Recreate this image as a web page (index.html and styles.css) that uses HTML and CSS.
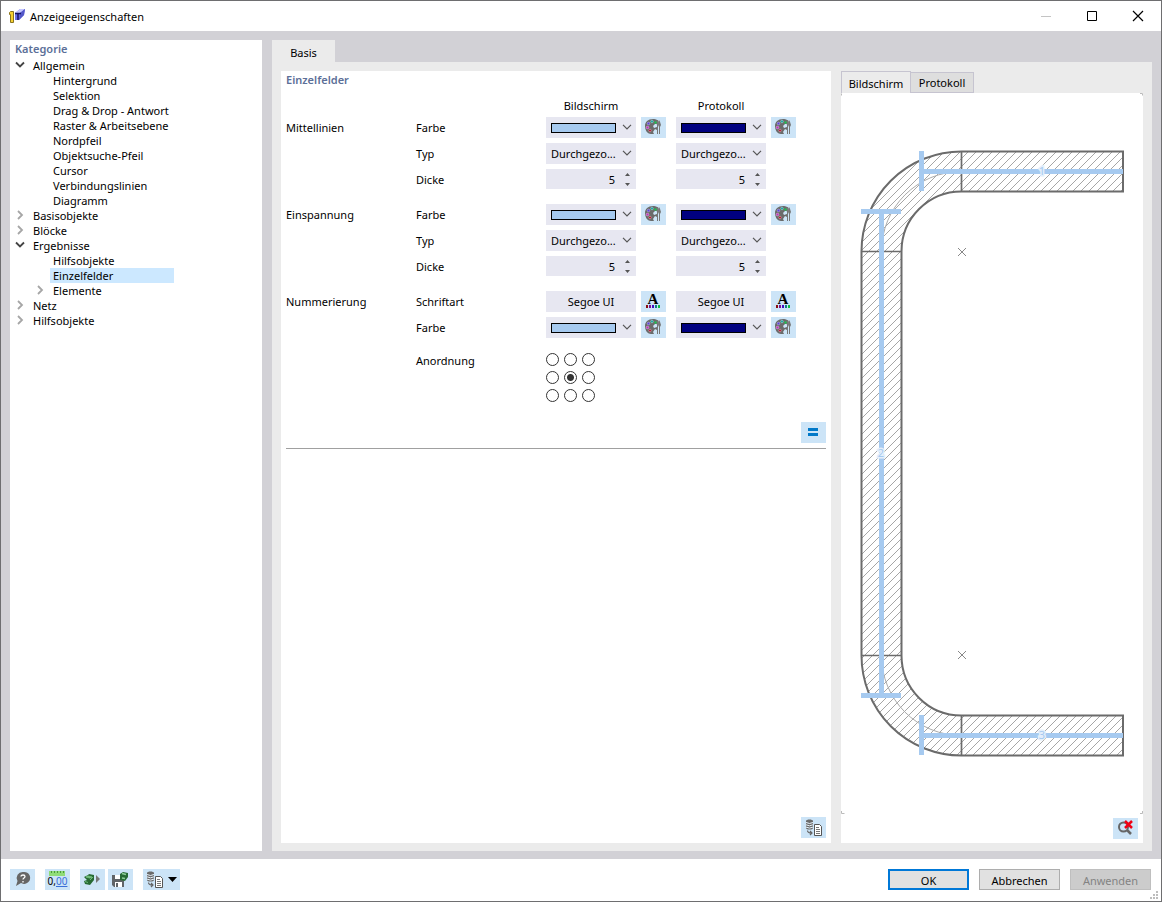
FILE: index.html
```html
<!DOCTYPE html>
<html lang="de">
<head>
	<meta charset="utf-8">
	<title>Anzeigeeigenschaften</title>
	<link rel="stylesheet" href="styles.css">
</head>
<body>

<!-- icons -->
<svg class="defs" width="0" height="0" aria-hidden="true">
	<symbol id="palette" viewBox="0 0 25 21">
		<path fill="#6b6b6b" d="M12 2C7 2 4 5 4 9c0 5 3 8 6 8h3l-1-2 2-3 2 1v-3l-3 1-1-2 2-2h2V3c-1-.700-2.500-1-4-1z"/>
		<path fill="#777" d="M15 5l1 3v9h1V8l1-3-1-2h-1zM18.500 3l1.500 5-1 2v7h-1v-7l-1-2z"/>
		<circle cx="7.500" cy="6.500" r="1.300" fill="#5a3fe0" stroke="#c8c0f0" stroke-width=".5"/>
		<circle cx="11" cy="4.500" r="1.300" fill="#16a0a0" stroke="#b0e0e0" stroke-width=".5"/>
		<circle cx="14.500" cy="5.500" r="1.200" fill="#20c050"/>
		<circle cx="6.500" cy="10.500" r="1.300" fill="#c030c0" stroke="#f0c0f0" stroke-width=".5"/>
		<circle cx="9" cy="13.500" r="1.300" fill="#b01030" stroke="#e0c0c0" stroke-width=".5"/>
	</symbol>
	<symbol id="down" viewBox="0 0 10 6">
		<path d="M1 .8l4 4 4-4" fill="none" stroke="#555" stroke-width="1.2"/>
	</symbol>
	<symbol id="spin" viewBox="0 0 5 13">
		<path d="M0 3l2.500-3L5 3zM0 10l2.500 3L5 10z" fill="#555"/>
	</symbol>
	<symbol id="open" viewBox="0 0 10 10">
		<path d="M1 2.500l4 4 4-4" fill="none" stroke="#444" stroke-width="1.8"/>
	</symbol>
	<symbol id="closed" viewBox="0 0 10 10">
		<path d="M3 1l4 4-4 4" fill="none" stroke="#a6a6a6" stroke-width="1.8"/>
	</symbol>
	<symbol id="copy" viewBox="0 0 18 17">
		<path d="M1 2c0-2 7-2 7 0v7c0 2-7 2-7 0z" fill="#6b6b6b"/>
		<path d="M1 3.500q3.500 2 7 0M1 5.800q3.500 2 7 0M1 8.100q3.500 2 7 0" fill="none" stroke="#e8f2fb"/>
		<path d="M2.500 11.500c0 2 1 2.500 4 2.500M5 12l2 2-2 2" fill="none" stroke="#666" stroke-width="1.200"/>
		<path d="M9.500 5.500h5l2 2v9h-7z" fill="#fff" stroke="#555"/>
		<path d="M11 8.500h3M11 10.500h4M11 12.500h4M11 14.500h4" stroke="#777"/>
	</symbol>
	<symbol id="fontcolor" viewBox="0 0 25 21">
		<path fill="#8b1010" d="M5 14h2v3H5z"/>
		<path fill="#801090" d="M8 14h2v3H8z"/>
		<path fill="#4010c0" d="M11 14h2v3h-2z"/>
		<path fill="#108088" d="M14 14h2v3h-2z"/>
		<path fill="#10c040" d="M17 14h2v3h-2z"/>
	</symbol>
</svg>

<div class="window">

	<header class="titlebar">
		<svg class="logo" viewBox="0 0 16 16">
			<path d="M6 5l5-4h5l-1 6-5 5H6z" fill="#6d70e8"/>
			<path d="M6 5l5-4h5l-5 4z" fill="#c5c6ff"/>
			<path d="M11 5l5-4-1 6-5 5z" fill="#5357c8"/>
			<path d="M.500 4.500l1-1h3v11h-3v-8h-1z" fill="#f6d030" stroke="#8a7420"/>
			<path d="M6 5.500h6M9 5v7" stroke="#141464" stroke-width="1.500"/>
		</svg>
		<h1>Anzeigeeigenschaften</h1>
		<div class="winbtns">
			<button type="button" aria-label="Minimieren" disabled><svg viewBox="0 0 12 12"><path d="M1 6.500h10" stroke="#c4c4c4"/></svg></button>
			<button type="button" aria-label="Maximieren"><svg viewBox="0 0 12 12"><path d="M1.500 1.500h9v9h-9z" fill="none" stroke="#000"/></svg></button>
			<button type="button" aria-label="Schließen"><svg viewBox="0 0 12 12"><path d="M1 1l10 10M11 1L1 11" stroke="#000" stroke-width="1.200"/></svg></button>
		</div>
	</header>

	<div class="main">

		<!-- category tree -->
		<nav class="tree">
			<h2>Kategorie</h2>
			<ul>
				<li><svg><use href="#open"/></svg><a href="#">Allgemein</a>
					<ul>
						<li><a href="#">Hintergrund</a></li>
						<li><a href="#">Selektion</a></li>
						<li><a href="#">Drag &amp; Drop - Antwort</a></li>
						<li><a href="#">Raster &amp; Arbeitsebene</a></li>
						<li><a href="#">Nordpfeil</a></li>
						<li><a href="#">Objektsuche-Pfeil</a></li>
						<li><a href="#">Cursor</a></li>
						<li><a href="#">Verbindungslinien</a></li>
						<li><a href="#">Diagramm</a></li>
					</ul>
				</li>
				<li><svg><use href="#closed"/></svg><a href="#">Basisobjekte</a></li>
				<li><svg><use href="#closed"/></svg><a href="#">Blöcke</a></li>
				<li><svg><use href="#open"/></svg><a href="#">Ergebnisse</a>
					<ul>
						<li><a href="#">Hilfsobjekte</a></li>
						<li><a href="#" class="selected">Einzelfelder</a></li>
						<li><svg><use href="#closed"/></svg><a href="#">Elemente</a></li>
					</ul>
				</li>
				<li><svg><use href="#closed"/></svg><a href="#">Netz</a></li>
				<li><svg><use href="#closed"/></svg><a href="#">Hilfsobjekte</a></li>
			</ul>
		</nav>

		<div class="content">
			<div class="tabs"><button type="button" class="tab">Basis</button></div>

			<div class="page">

				<!-- settings -->
				<form class="settings">
					<h2>Einzelfelder</h2>

					<div class="row head">
						<span class="c3">Bildschirm</span>
						<span class="c5">Protokoll</span>
					</div>

					<div class="group">
						<div class="row">
							<span>Mittellinien</span><span>Farbe</span>
							<div class="field"><select aria-label="Farbe Bildschirm"><option></option></select><i class="swatch light"></i><svg class="arrow"><use href="#down"/></svg></div>
							<button type="button" class="icon" aria-label="Farbe bearbeiten"><svg><use href="#palette"/></svg></button>
							<div class="field c5"><select aria-label="Farbe Protokoll"><option></option></select><i class="swatch navy"></i><svg class="arrow"><use href="#down"/></svg></div>
							<button type="button" class="icon" aria-label="Farbe bearbeiten"><svg><use href="#palette"/></svg></button>
						</div>
						<div class="row">
							<span class="c2">Typ</span>
							<div class="field"><select aria-label="Typ Bildschirm"><option>Durchgezo...</option></select><svg class="arrow"><use href="#down"/></svg></div>
							<div class="field c5"><select aria-label="Typ Protokoll"><option>Durchgezo...</option></select><svg class="arrow"><use href="#down"/></svg></div>
						</div>
						<div class="row">
							<span class="c2">Dicke</span>
							<div class="field num"><input type="number" value="5" aria-label="Dicke Bildschirm"><svg class="spin"><use href="#spin"/></svg></div>
							<div class="field num c5"><input type="number" value="5" aria-label="Dicke Protokoll"><svg class="spin"><use href="#spin"/></svg></div>
						</div>
					</div>

					<div class="group">
						<div class="row">
							<span>Einspannung</span><span>Farbe</span>
							<div class="field"><select aria-label="Farbe Bildschirm"><option></option></select><i class="swatch light"></i><svg class="arrow"><use href="#down"/></svg></div>
							<button type="button" class="icon" aria-label="Farbe bearbeiten"><svg><use href="#palette"/></svg></button>
							<div class="field c5"><select aria-label="Farbe Protokoll"><option></option></select><i class="swatch navy"></i><svg class="arrow"><use href="#down"/></svg></div>
							<button type="button" class="icon" aria-label="Farbe bearbeiten"><svg><use href="#palette"/></svg></button>
						</div>
						<div class="row">
							<span class="c2">Typ</span>
							<div class="field"><select aria-label="Typ Bildschirm"><option>Durchgezo...</option></select><svg class="arrow"><use href="#down"/></svg></div>
							<div class="field c5"><select aria-label="Typ Protokoll"><option>Durchgezo...</option></select><svg class="arrow"><use href="#down"/></svg></div>
						</div>
						<div class="row">
							<span class="c2">Dicke</span>
							<div class="field num"><input type="number" value="5" aria-label="Dicke Bildschirm"><svg class="spin"><use href="#spin"/></svg></div>
							<div class="field num c5"><input type="number" value="5" aria-label="Dicke Protokoll"><svg class="spin"><use href="#spin"/></svg></div>
						</div>
					</div>

					<div class="group">
						<div class="row">
							<span>Nummerierung</span><span>Schriftart</span>
							<button type="button" class="font">Segoe UI</button>
							<button type="button" class="icon letter" aria-label="Schriftart bearbeiten"><svg><use href="#fontcolor"/></svg><b>A</b></button>
							<button type="button" class="font c5">Segoe UI</button>
							<button type="button" class="icon letter" aria-label="Schriftart bearbeiten"><svg><use href="#fontcolor"/></svg><b>A</b></button>
						</div>
						<div class="row">
							<span class="c2">Farbe</span>
							<div class="field"><select aria-label="Farbe Bildschirm"><option></option></select><i class="swatch light"></i><svg class="arrow"><use href="#down"/></svg></div>
							<button type="button" class="icon" aria-label="Farbe bearbeiten"><svg><use href="#palette"/></svg></button>
							<div class="field c5"><select aria-label="Farbe Protokoll"><option></option></select><i class="swatch navy"></i><svg class="arrow"><use href="#down"/></svg></div>
							<button type="button" class="icon" aria-label="Farbe bearbeiten"><svg><use href="#palette"/></svg></button>
						</div>
					</div>

					<div class="row place">
						<span class="c2">Anordnung</span>
						<div class="radios">
							<input type="radio" name="pos" aria-label="oben links">
							<input type="radio" name="pos" aria-label="oben">
							<input type="radio" name="pos" aria-label="oben rechts">
							<input type="radio" name="pos" aria-label="links">
							<input type="radio" name="pos" aria-label="Mitte" checked>
							<input type="radio" name="pos" aria-label="rechts">
							<input type="radio" name="pos" aria-label="unten links">
							<input type="radio" name="pos" aria-label="unten">
							<input type="radio" name="pos" aria-label="unten rechts">
						</div>
					</div>

					<div class="equal">
						<button type="button" class="icon" aria-label="Angleichen"><svg viewBox="0 0 25 21"><path d="M7 6h10v3H7zM7 11h10v3H7z" fill="#0078c8"/></svg></button>
					</div>

					<div class="bottom">
						<button type="button" class="icon" aria-label="Kopieren"><svg class="small"><use href="#copy"/></svg></button>
					</div>
				</form>

				<!-- preview -->
				<section class="preview">
					<div class="viewtabs">
						<button type="button" class="active">Bildschirm</button>
						<button type="button">Protokoll</button>
					</div>
					<div class="view">
						<svg class="drawing" viewBox="841 93 302 721">
							<defs>
								<pattern id="hatch" width="8" height="8" patternUnits="userSpaceOnUse">
									<path d="M-1 9L9 -1M-1 1L1 -1M7 9L9 7" stroke="#808080" stroke-width=".7"/>
								</pattern>
							</defs>
							<path d="M1123 151.500H961.500A100 100 0 0 0 861.500 251.500V655.500A100 100 0 0 0 961.500 755.500H1123V715.500H961.500A60 60 0 0 1 901.500 655.500V251.500A60 60 0 0 1 961.500 191.500H1123z" fill="url(#hatch)" stroke="#6b6b6b" stroke-width="2"/>
							<path d="M961.500 151v40M961.500 715v40M861 251.500h40M861 655.500h40" stroke="#6b6b6b" stroke-width="1.700"/>
							<path d="M961.500 171.500A80 80 0 0 0 881.500 251.500M881.500 655.500A80 80 0 0 0 961.500 735.500" fill="none" stroke="#aaa"/>
							<path d="M921.500 151v40M921.500 171.500H1123M861 211.500h40M881.500 211V695M861 695.500h40M921.500 715v40M921.500 735.500H1123" stroke="#a6caf0" stroke-width="5" fill="none"/>
							<path d="M958 248l8 8M966 248l-8 8M958 651l8 8M966 651l-8 8" stroke="#888"/>
							<path d="M841.500 95.500v-2M1140 93.500h2.500v2M841.500 811v2.500h3M1140 813.500h2.500v-2.500" fill="none" stroke="#bbb"/>
							<g class="tags">
								<text x="1042" y="175">1</text>
								<text x="881" y="457">2</text>
								<text x="1042" y="739">3</text>
							</g>
						</svg>
						<div class="viewbar">
							<button type="button" class="icon" aria-label="Zoom zurücksetzen">
								<svg viewBox="0 0 25 21">
									<circle cx="10.500" cy="9" r="4.500" fill="none" stroke="#666" stroke-width="2"/>
									<path d="M14 12l4 4" stroke="#666" stroke-width="2.500"/>
									<path d="M12 3l7 7M19 3l-7 7" stroke="#f00014" stroke-width="2.500"/>
								</svg>
							</button>
						</div>
					</div>
				</section>
			</div>
		</div>
	</div>

	<footer class="footer">
		<div class="tools">
			<button type="button" class="icon" aria-label="Hilfe">
				<svg viewBox="0 0 25 21"><path d="M13 3a6 6 0 1 1-2 11l-5 3 1.500-5A6 6 0 0 1 13 3z" fill="#666"/><path d="M11 7.500c0-2 4-2 4 0 0 1.500-2 1.500-2 3M13 12v1.500" fill="none" stroke="#fff" stroke-width="1.300"/></svg>
			</button>
			<button type="button" class="icon units" aria-label="Einheiten">
				<svg viewBox="0 0 25 21"><path d="M4 2h16v5H4z" fill="#90dc78"/><path d="M6.500 2v2M9.500 2v2M12.500 2v2M15.500 2v2M18.500 2v2" stroke="#4b9a3c"/></svg>
				<span>0,<u>00</u></span>
			</button>
			<button type="button" class="icon" aria-label="Laden">
				<svg viewBox="0 0 25 21"><path d="M4 8l4-2 1-1 5 1v5l-4 5-5-1-1-3 3-1z" fill="#276b35"/><path d="M8 7l4 1-2 1-4-1zM5 12.500l3 1M10 11l3-3" fill="#8ccf98" stroke="#6dbb7a"/><path d="M16 6l4 4-4 4z" fill="#777"/></svg>
			</button>
			<button type="button" class="icon" aria-label="Speichern">
				<svg viewBox="0 0 25 21"><path d="M4 6h12v12H6l-2-2z" fill="#606468"/><path d="M7 6h5v4H7zM7 13h7v5H7z" fill="#fff"/><path d="M8 14h2v4H8z" fill="#606468"/><path d="M12 5l3-2 5 1v4l-3 4-5-1v-3z" fill="#276b35"/><path d="M14 4.500l4 1M14 9l3 .500" stroke="#8ccf98" stroke-width="1.500"/></svg>
			</button>
			<button type="button" class="icon wide" aria-label="Vorlage"><svg class="small"><use href="#copy"/></svg><svg class="caret" viewBox="0 0 9 5"><path d="M0 0h9L4.500 5z"/></svg></button>
		</div>
		<div class="actions">
			<button type="button" class="default">OK</button>
			<button type="button">Abbrechen</button>
			<button type="button" disabled>Anwenden</button>
		</div>
		<svg class="grip" viewBox="0 0 8 8"><path d="M6 0h2v2H6zM3 3h2v2H3zM6 3h2v2H6zM0 6h2v2H0zM3 6h2v2H3zM6 6h2v2H6z" fill="#bdbdbd"/></svg>
	</footer>
</div>

</body>
</html>
```
FILE: styles.css
```css
* { margin:0; padding:0; box-sizing:border-box; }
body { font:11px/15px "Noto Sans", "Open Sans", sans-serif; color:#000; }
button, input, select { font:inherit; color:inherit; border:0; border-radius:0; }
svg { display:block; flex:none; }
a { color:inherit; text-decoration:none; }
h2 { font-size:11px; line-height:15px; font-weight:600; color:#5c6f98; }
.defs { position:absolute; }

.window { display:flex; flex-direction:column; min-height:100vh; background:#fff; border:1px solid #6e6e70; }

/* title bar */
.titlebar { display:flex; align-items:center; height:30px; padding-left:8px; }
.logo { width:16px; height:16px; }
.titlebar h1 { flex:1; padding-left:5px; font-size:11px; line-height:15px; font-weight:normal; }
.winbtns { display:flex; }
.winbtns button { width:46px; height:30px; background:none; display:flex; align-items:center; justify-content:center; }
.winbtns svg { width:12px; height:12px; }

.main { flex:1; display:flex; gap:10px; padding:9px 9px 8px; background:#d2d1d6; }

/* tree */
.tree { width:252px; padding:1px 5px; background:#fff; }
.tree h2 { margin-bottom:2px; }
.tree ul { list-style:none; }
.tree > ul > li { padding-left:15px; }
.tree li li { padding-left:20px; }
.tree li svg { float:left; width:10px; height:10px; margin:2px 0 0 -15px; }
.tree a { display:block; padding-left:3px; line-height:15px; }
.tree a.selected { width:124px; background:#cce8ff; }

/* content */
.content { flex:1; display:flex; flex-direction:column; }
.tabs { height:22px; display:flex; }
.tab { width:63px; padding-top:3px; background:#ebebeb; }
.page { flex:1; display:flex; gap:10px; padding:9px 9px 8px; background:#ebebeb; }

.settings { flex:1; display:flex; flex-direction:column; padding:1px 5px 5px; background:#fff; }
.row { display:grid; grid-template-columns:130px 130px 90px 5px 25px 10px 90px 5px 25px; height:26px; align-items:start; }
.row > span { line-height:21px; }
.row > * { grid-row:1; }
.row .c2 { grid-column:2; }
.row .field, .row .font { grid-column:3; }
.row .icon { grid-column:5; }
.row .field.c5, .row .font.c5 { grid-column:7; }
.row .c5 + .icon { grid-column:9; }
.head { height:30px; padding-top:8px; text-align:center; }
.head .c3 { grid-column:3; }
.head .c5 { grid-column:7; }
.group { margin-bottom:9px; }

.field { position:relative; height:21px; background:#e7e7f1; }
.field select { appearance:none; width:100%; height:21px; padding:0 5px; background:transparent; }
.field input { appearance:textfield; width:100%; height:20px; padding-right:21px; text-align:right; background:transparent; }
.field input::-webkit-inner-spin-button { display:none; }
.num { height:20px; }
.swatch { position:absolute; left:5px; top:6px; width:65px; height:10px; border:1px solid #000; pointer-events:none; }
.light { background:#a6caf0; }
.navy { background:#000080; }
.arrow { position:absolute; right:4px; top:7px; width:10px; height:6px; pointer-events:none; }
.spin { position:absolute; right:6px; top:4px; width:5px; height:13px; pointer-events:none; }
.font { height:21px; background:#e7e7f1; }

.icon { position:relative; width:25px; height:21px; display:flex; align-items:center; justify-content:center; background:#cce4f7; }
.icon svg { width:25px; height:21px; }
.icon .small { width:18px; height:17px; }
.letter b { position:absolute; left:0; top:0; width:24px; font:bold 15px/16px "Liberation Serif", serif; text-align:center; }

.place { height:69px; margin-top:1px; }
.place > span { line-height:15px; }
.radios { grid-column:3; display:grid; grid-template-columns:repeat(3, 13px); gap:5px; }
.radios input { appearance:none; width:13px; height:13px; border:1px solid #333; border-radius:50%; background:#fff; }
.radios input:checked { background:radial-gradient(#333 3px, #fff 4px); }

.equal { display:flex; justify-content:flex-end; padding-bottom:5px; border-bottom:1px solid #a0a0a0; }
.bottom { margin-top:auto; display:flex; justify-content:flex-end; }

/* preview */
.preview { width:302px; display:flex; flex-direction:column; }
.viewtabs { display:flex; align-items:flex-end; height:22px; }
.viewtabs button { height:21px; width:63px; border:1px solid #c6c4d0; border-left:0; background:#dedede; }
.viewtabs .active { height:22px; width:70px; padding-top:2px; border-left:1px solid #c6c4d0; border-bottom:0; background:#ebebeb; }
.view { flex:1; display:flex; flex-direction:column; background:#fff; }
.drawing { width:100%; flex:1; }
.viewbar { display:flex; justify-content:flex-end; padding:4px 5px; }
.tags text { font-size:11px; text-anchor:middle; fill:#a6caf0; stroke:#e4effb; stroke-width:3px; paint-order:stroke; }

/* footer */
.footer { position:relative; display:flex; justify-content:space-between; height:42px; padding:10px 10px 0 9px; }
.tools { display:flex; }
.tools .icon { margin-right:10px; }
.tools .icon:nth-child(3) { margin-right:3px; }
.tools .wide { width:37px; gap:4px; }
.icon .caret { width:9px; height:5px; }
.units span { position:absolute; left:0; right:0; bottom:3px; font-size:10px; line-height:12px; text-align:center; }
.units u { color:#3a6fd8; }
.actions { display:flex; gap:10px; }
.actions button { width:81px; height:21px; padding-top:1px; border:1px solid #adadad; background:#e1e1e1; }
.actions .default { border:2px solid #0078d7; }
.actions button:disabled { color:#838383; background:#ccc; border-color:#bfbfbf; }
.grip { position:absolute; right:3px; bottom:2px; width:8px; height:8px; }
```
